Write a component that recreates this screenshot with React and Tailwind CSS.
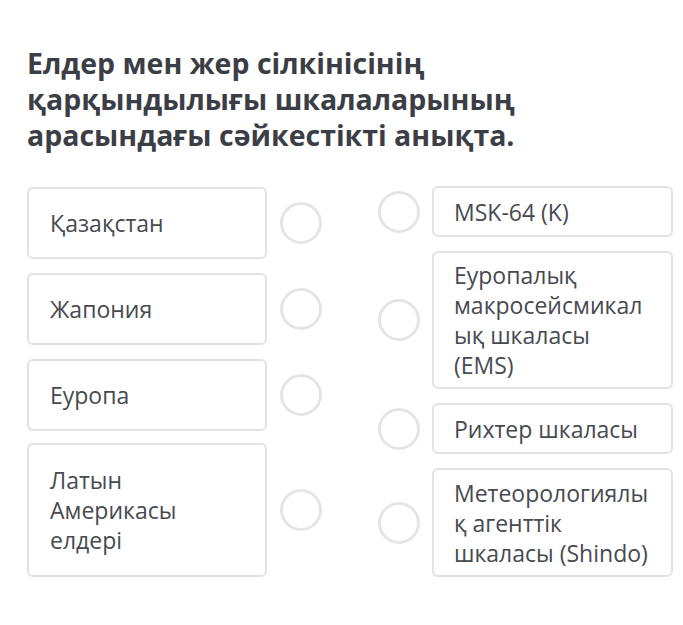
import React from "react";

const leftItems = [
  { text: "Қазақстан", h: "h-[72px]", mt: "" },
  { text: "Жапония", h: "h-[72px]", mt: "" },
  { text: "Еуропа", h: "h-[72px]", mt: "" },
  { text: "Латын Америкасы елдері", h: "h-[134px]", mt: "-mt-[2px]" },
];

const rightItems = [
  { text: "MSK-64 (K)", h: "h-[51px]" },
  { text: "Еуропалық макросейсмикалық шкаласы (EMS)", h: "h-[138px]" },
  { text: "Рихтер шкаласы", h: "h-[51px]" },
  { text: "Метеорологиялық агенттік шкаласы (Shindo)", h: "h-[109px]" },
];

const Circle = () => (
  <div className="w-[42px] h-[42px] shrink-0 rounded-full border-[3px] border-[#e3e5e7] bg-white" />
);

const App = () => {
  return (
    <div
      className="w-[683px] h-[625px] bg-white text-[#474a50]"
      style={{ fontFamily: '"Open Sans", "Noto Sans", sans-serif' }}
    >
      <div className="pt-[45px] pl-[27px]">
        <h1 className="w-[560px] text-[28.5px] leading-[36px] font-bold text-[#3b3e45]">
          Елдер мен жер сілкінісінің қарқындылығы шкалаларының арасындағы сәйкестікті анықта.
        </h1>
      </div>

      <div className="flex pl-[27px] pt-[34px] gap-[56px]">
        <div className="flex flex-col gap-[14px] w-[295px]">
          {leftItems.map((item) => (
            <div key={item.text} className={`flex items-center gap-[13px] ${item.mt}`}>
              <div
                className={`w-[240px] ${item.h} shrink-0 flex items-center px-[21px] rounded-[6px] border-2 border-[#e2e2e2] text-[23px] leading-[30px]`}
              >
                {item.text}
              </div>
              <Circle />
            </div>
          ))}
        </div>

        <div className="flex flex-col gap-[14px] w-[295px] -mt-[1px]">
          {rightItems.map((item) => (
            <div key={item.text} className="flex items-center gap-[12px]">
              <Circle />
              <div
                className={`w-[241px] ${item.h} shrink-0 flex items-center pl-[20px] pr-[22px] rounded-[6px] border-2 border-[#e2e2e2] text-[23px] leading-[30px] [overflow-wrap:anywhere]`}
              >
                <span className="min-w-0">{item.text}</span>
              </div>
            </div>
          ))}
        </div>
      </div>
    </div>
  );
};

export default App;
